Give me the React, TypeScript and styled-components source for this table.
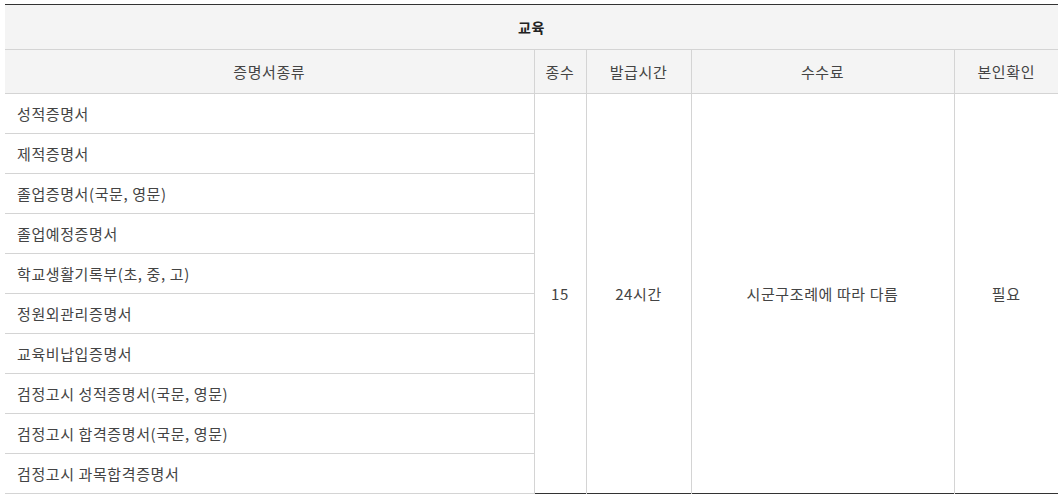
import * as React from "react";
import styled, { createGlobalStyle } from "styled-components";

const GlobalStyle = createGlobalStyle`
  html, body {
    margin: 0;
    padding: 0;
    background: #ffffff;
  }
  body {
    font-family: "Noto Sans CJK KR", "Noto Sans", sans-serif;
    color: #333333;
  }
`;

const documents = [
  "성적증명서",
  "제적증명서",
  "졸업증명서(국문, 영문)",
  "졸업예정증명서",
  "학교생활기록부(초, 중, 고)",
  "정원외관리증명서",
  "교육비납입증명서",
  "검정고시 성적증명서(국문, 영문)",
  "검정고시 합격증명서(국문, 영문)",
  "검정고시 과목합격증명서",
];

function App() {
  return (
    <>
      <GlobalStyle />
      <Wrapper>
        <Table>
          <colgroup>
            <col style={{ width: 529 }} />
            <col style={{ width: 52 }} />
            <col style={{ width: 105 }} />
            <col style={{ width: 263 }} />
            <col style={{ width: 104 }} />
          </colgroup>
          <thead>
            <tr>
              <Caption colSpan={5}>교육</Caption>
            </tr>
            <tr>
              <HeadCell>증명서종류</HeadCell>
              <HeadCell>종수</HeadCell>
              <HeadCell>발급시간</HeadCell>
              <HeadCell>수수료</HeadCell>
              <HeadCell>본인확인</HeadCell>
            </tr>
          </thead>
          <tbody>
            {documents.map((doc, i) => (
              <tr key={doc}>
                <NameCell>{doc}</NameCell>
                {i === 0 && (
                  <>
                    <MergedCell rowSpan={documents.length}>15</MergedCell>
                    <MergedCell rowSpan={documents.length}>24시간</MergedCell>
                    <MergedCell rowSpan={documents.length}>
                      시군구조례에 따라 다름
                    </MergedCell>
                    <MergedCell rowSpan={documents.length}>필요</MergedCell>
                  </>
                )}
              </tr>
            ))}
          </tbody>
        </Table>
      </Wrapper>
    </>
  );
}

const Wrapper = styled.div`
  padding: 4px 0 0 5px;
`;

const Table = styled.table`
  width: 1053px;
  table-layout: fixed;
  border-collapse: collapse;
  border-top: 1px solid #333333;
  border-bottom: 1px solid #333333;
  font-size: 15px;
  line-height: 20px;
  letter-spacing: 0.6px;
`;

const Caption = styled.th`
  height: 44px;
  padding: 0;
  background: #f4f4f4;
  border-bottom: 1px solid #d4d4d4;
  font-size: 14px;
  font-weight: 700;
  color: #222222;
  text-align: center;
`;

const HeadCell = styled.th`
  height: 43px;
  padding: 0;
  background: #f4f4f4;
  border: 1px solid #d4d4d4;
  border-top: none;
  font-weight: 400;
  color: #444444;
  text-align: center;

  &:first-child {
    border-left: none;
  }
  &:last-child {
    border-right: none;
  }
`;

const NameCell = styled.td`
  height: 39px;
  padding: 0 12px;
  border-bottom: 1px solid #d4d4d4;
  border-right: 1px solid #d4d4d4;
  color: #444444;
  text-align: left;
`;

const MergedCell = styled.td`
  padding: 0;
  border-right: 1px solid #d4d4d4;
  color: #444444;
  text-align: center;
  vertical-align: middle;

  &:last-child {
    border-right: none;
  }
`;

export default App;
